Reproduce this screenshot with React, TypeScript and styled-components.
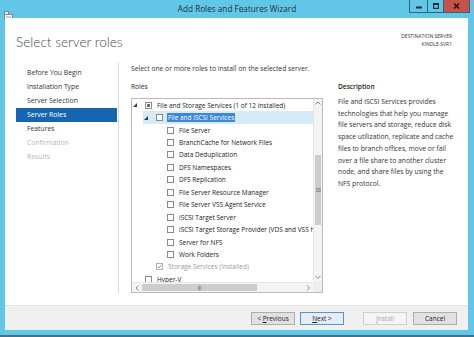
import React from "react"
import styled, { createGlobalStyle } from "styled-components"

const FRAME = "#62c6e7"
const BODY_FONT = `"Open Sans", "Noto Sans", sans-serif`

const GlobalStyle = createGlobalStyle`
  html, body {
    margin: 0;
    padding: 0;
    background: ${FRAME};
    overflow: hidden;
  }
  body {
    font-family: ${BODY_FONT};
  }
`

const Window = styled.div`
  width: 474px;
  height: 337px;
  background: ${FRAME};
  display: flex;
  flex-direction: column;
  overflow: hidden;
`

const TitleBar = styled.div`
  height: 18px;
  flex: none;
  display: grid;
  grid-template-columns: 176px 122px 176px;
  align-items: start;
`

const AppIcon = styled.div`
  padding: 3px 0 0 4px;
  height: 9px;
`

const TitleText = styled.div`
  line-height: 18px;
  font-size: 8.2px;
  color: #1d3340;
  white-space: nowrap;
  text-align: center;
`

const CaptionButtons = styled.div`
  justify-self: end;
  margin-right: 4px;
  display: flex;
  gap: 1px;
  padding: 0 1px 1px;
  background: #2f6479;
`

const CaptionButton = styled.div`
  width: 17px;
  height: 12px;
  background: ${FRAME};
  display: flex;
  align-items: center;
  justify-content: center;
`

const MinButton = styled(CaptionButton)`
  width: 17px;
`

const MaxButton = styled(CaptionButton)`
  width: 15px;
`

const CloseButton = styled(CaptionButton)`
  width: 25px;
  background: #c7524a;
`

const Client = styled.div`
  flex: 1;
  margin: 0 6px 0 5px;
  background: #ffffff;
  display: flex;
  flex-direction: column;
  min-height: 0;
`

const BottomFrame = styled.div`
  height: 5px;
  flex: none;
  border-bottom: 2px solid #3e7387;
`

const Header = styled.header`
  height: 40px;
  flex: none;
  box-sizing: border-box;
  padding: 14px 16px 0 11px;
  display: flex;
  justify-content: space-between;
  align-items: flex-start;
`

const PageTitle = styled.h1`
  margin: 2px 0 0;
  font-family: Lato, "Open Sans", sans-serif;
  font-weight: 300;
  font-size: 13.6px;
  line-height: 16px;
  color: #4a4a4a;
`

const Destination = styled.div`
  text-align: right;
  font-size: 5px;
  line-height: 8px;
  color: #333;
`

const Body = styled.div`
  flex: 1;
  display: flex;
  min-height: 0;
`

const Nav = styled.nav`
  width: 101px;
  flex: none;
  margin: 5px 0 12px;
  padding: 3px 1px 0 11px;
  border-right: 1px solid #dadada;
`

const NavItem = styled.div<{ $active?: boolean; $disabled?: boolean }>`
  height: 14px;
  line-height: 14px;
  padding-left: 11px;
  font-size: 6.8px;
  white-space: nowrap;
  background: ${(p) => (p.$active ? "#1565b0" : "transparent")};
  color: ${(p) => (p.$active ? "#ffffff" : p.$disabled ? "#b8b8b8" : "#333")};
`

const Content = styled.main`
  flex: 1;
  padding: 6px 0 0 12px;
  min-width: 0;
`

const Intro = styled.div`
  font-size: 6.75px;
  line-height: 10px;
  color: #333;
  white-space: nowrap;
`

const Columns = styled.div`
  display: flex;
  gap: 15px;
  margin-top: 8px;
`

const RolesColumn = styled.section`
  width: 192px;
  flex: none;
`

const Label = styled.div<{ $bold?: boolean }>`
  font-size: 6.6px;
  line-height: 10px;
  font-weight: ${(p) => (p.$bold ? 600 : 400)};
  color: #222;
  margin-bottom: 6px;
`

const ListBox = styled.div`
  width: 192px;
  height: 195px;
  box-sizing: border-box;
  border: 1px solid #bababa;
  display: grid;
  grid-template-columns: 1fr 9px;
  grid-template-rows: 1fr 10px;
`

const Tree = styled.div`
  overflow: hidden;
  min-width: 0;
`

const Row = styled.div`
  height: 12.45px;
  display: flex;
  align-items: stretch;
  white-space: nowrap;
`

const Indent = styled.div<{ $level: number }>`
  width: ${(p) => p.$level * 11}px;
  flex: none;
`

const RowBody = styled.div<{ $selected?: boolean }>`
  flex: 1;
  display: flex;
  align-items: center;
  background: ${(p) => (p.$selected ? "#d5ebf8" : "transparent")};
`

const Expander = styled.div`
  width: 13px;
  flex: none;
  display: flex;
  align-items: center;
  padding-left: 1px;
  box-sizing: border-box;
`

const Check = styled.div<{ $dim?: boolean }>`
  width: 7px;
  height: 7px;
  flex: none;
  box-sizing: border-box;
  border: 1px solid ${(p) => (p.$dim ? "#b3b3b3" : "#8a8a8a")};
  background: #fff;
  margin-right: 5px;
  display: flex;
  align-items: center;
  justify-content: center;
`

const Partial = styled.div`
  width: 3px;
  height: 3px;
  background: #6d6d6d;
`

const RowText = styled.span<{ $selected?: boolean; $dim?: boolean }>`
  font-size: 6.5px;
  line-height: 9px;
  padding: 0 1px;
  margin-left: -1px;
  color: ${(p) => (p.$selected ? "#fff" : p.$dim ? "#9a9a9a" : "#222")};
  background: ${(p) => (p.$selected ? "#3d87d8" : "transparent")};
`

const VScroll = styled.div`
  background: #f4f4f4;
  border-left: 1px solid #e6e6e6;
  display: flex;
  flex-direction: column;
`

const HScroll = styled.div`
  background: #f4f4f4;
  border-top: 1px solid #e6e6e6;
  display: flex;
  align-items: stretch;
`

const Corner = styled.div`
  background: #ededed;
`

const ArrowBox = styled.div<{ $w: number; $h: number }>`
  width: ${(p) => p.$w}px;
  height: ${(p) => p.$h}px;
  flex: none;
  display: flex;
  align-items: center;
  justify-content: center;
`

const Spacer = styled.div`
  flex: 1;
`

const VThumb = styled.div`
  height: 70px;
  margin: 47px 1px 0;
  background: #cdcdcd;
  display: flex;
  align-items: center;
  justify-content: center;
`

const HThumb = styled.div`
  width: 115px;
  margin: 1px 0;
  background: #cdcdcd;
  display: flex;
  align-items: center;
  justify-content: center;
`

const DescColumn = styled.section`
  flex: 1;
`

const DescText = styled.p`
  margin: -2px 0 0;
  font-size: 6.75px;
  line-height: 11.7px;
  color: #333;
`

const DescLine = styled.span`
  display: block;
  white-space: nowrap;
`

const Footer = styled.footer`
  height: 25px;
  flex: none;
  box-sizing: border-box;
  background: #f0f0f0;
  border-top: 1px solid #e4e4e4;
  padding: 6px 11px 0 0;
  display: flex;
  justify-content: flex-end;
  align-items: flex-start;
`

const Button = styled.button<{ $primary?: boolean; $gap: number }>`
  width: 44px;
  height: 13px;
  margin-left: ${(p) => p.$gap}px;
  padding: 0;
  box-sizing: border-box;
  font-family: ${BODY_FONT};
  font-size: 6.5px;
  line-height: 11px;
  color: ${(p) => (p.disabled ? "#a8a8a8" : "#222")};
  background: ${(p) =>
    p.disabled ? "#f4f4f4" : p.$primary ? "#e3eef8" : "#e1e1e1"};
  border: 1px solid
    ${(p) => (p.disabled ? "#cfcfcf" : p.$primary ? "#5a95c8" : "#adadad")};
  border-radius: 0;
`

const Chevron: React.FC<{ dir: "up" | "down" | "left" | "right" }> = ({ dir }) => {
  const points = {
    up: "0.5,3.5 3,1 5.5,3.5",
    down: "0.5,1 3,3.5 5.5,1",
    left: "3.5,0.5 1,3 3.5,5.5",
    right: "1,0.5 3.5,3 1,5.5",
  }[dir]
  const vertical = dir === "up" || dir === "down"
  return (
    <svg width={vertical ? 6 : 5} height={vertical ? 5 : 6} viewBox={vertical ? "0 0 6 5" : "0 0 5 6"}>
      <polyline points={points} fill="none" stroke="#7a7a7a" strokeWidth="0.9" />
    </svg>
  )
}

const Grip: React.FC<{ vertical?: boolean }> = ({ vertical }) => (
  <svg width="5" height="4" viewBox="0 0 5 4" style={vertical ? undefined : { transform: "rotate(90deg)" }}>
    <path d="M0 0.5h5M0 2h5M0 3.5h5" stroke="#7d7d7d" strokeWidth="0.7" />
  </svg>
)

const Triangle = () => (
  <svg width="4" height="4" viewBox="0 0 4 4">
    <polygon points="4,0 4,4 0,4" fill="#3a3a3a" />
  </svg>
)

type Item = {
  label: string
  level: number
  expanded?: boolean
  state?: "none" | "partial" | "checked"
  selected?: boolean
  dim?: boolean
}

const items: Item[] = [
  { label: "File and Storage Services (1 of 12 installed)", level: 0, expanded: true, state: "partial" },
  { label: "File and iSCSI Services", level: 1, expanded: true, selected: true },
  { label: "File Server", level: 2 },
  { label: "BranchCache for Network Files", level: 2 },
  { label: "Data Deduplication", level: 2 },
  { label: "DFS Namespaces", level: 2 },
  { label: "DFS Replication", level: 2 },
  { label: "File Server Resource Manager", level: 2 },
  { label: "File Server VSS Agent Service", level: 2 },
  { label: "iSCSI Target Server", level: 2 },
  { label: "iSCSI Target Storage Provider (VDS and VSS hardware providers)", level: 2 },
  { label: "Server for NFS", level: 2 },
  { label: "Work Folders", level: 2 },
  { label: "Storage Services (Installed)", level: 1, state: "checked", dim: true },
  { label: "Hyper-V", level: 0 },
]

const steps = [
  { label: "Before You Begin" },
  { label: "Installation Type" },
  { label: "Server Selection" },
  { label: "Server Roles", active: true },
  { label: "Features" },
  { label: "Confirmation", disabled: true },
  { label: "Results", disabled: true },
]

const description = [
  "File and iSCSI Services provides",
  "technologies that help you manage",
  "file servers and storage, reduce disk",
  "space utilization, replicate and cache",
  "files to branch offices, move or fail",
  "over a file share to another cluster",
  "node, and share files by using the",
  "NFS protocol.",
]

const TreeRow: React.FC<{ item: Item }> = ({ item }) => (
  <Row>
    <Indent $level={item.level} />
    <RowBody $selected={item.selected}>
      <Expander>{item.expanded && <Triangle />}</Expander>
      <Check $dim={item.dim}>
        {item.state === "partial" && <Partial />}
        {item.state === "checked" && (
          <svg width="5" height="5" viewBox="0 0 5 5">
            <polyline points="0.6,2.6 1.9,3.9 4.4,0.8" fill="none" stroke="#8c8c8c" strokeWidth="0.9" />
          </svg>
        )}
      </Check>
      <RowText $selected={item.selected} $dim={item.dim}>
        {item.label}
      </RowText>
    </RowBody>
  </Row>
)

const App: React.FC = () => {
  return (
    <Window>
      <GlobalStyle />
      <TitleBar>
        <AppIcon>
          <svg width="9" height="9" viewBox="0 0 9 9">
            <rect x="0.5" y="0.5" width="4" height="3" fill="#e8f2f6" stroke="#6b7b84" strokeWidth="0.8" />
            <rect x="0.5" y="3.5" width="8" height="5" fill="#f4f8fa" stroke="#6b7b84" strokeWidth="0.8" />
            <path d="M2 6h5" stroke="#7d8c94" strokeWidth="0.8" />
          </svg>
        </AppIcon>
        <TitleText>Add Roles and Features Wizard</TitleText>
        <CaptionButtons>
          <MinButton>
            <svg width="6" height="6" viewBox="0 0 6 6">
              <rect x="0" y="3.5" width="6" height="2" fill="#1f2d33" />
            </svg>
          </MinButton>
          <MaxButton>
            <svg width="6" height="6" viewBox="0 0 6 6">
              <rect x="0.6" y="0.6" width="4.8" height="4.8" fill="none" stroke="#1f2d33" strokeWidth="1.2" />
              <rect x="0" y="0" width="6" height="2" fill="#1f2d33" />
            </svg>
          </MaxButton>
          <CloseButton>
            <svg width="7" height="6" viewBox="0 0 7 6">
              <path d="M1 0.5l5 5M6 0.5l-5 5" stroke="#2b1414" strokeWidth="1.6" />
            </svg>
          </CloseButton>
        </CaptionButtons>
      </TitleBar>

      <Client>
        <Header>
          <PageTitle>Select server roles</PageTitle>
          <Destination>
            <div>DESTINATION SERVER</div>
            <div>KINDLE-SVR1</div>
          </Destination>
        </Header>

        <Body>
          <Nav>
            {steps.map((s) => (
              <NavItem key={s.label} $active={s.active} $disabled={s.disabled}>
                {s.label}
              </NavItem>
            ))}
          </Nav>

          <Content>
            <Intro>Select one or more roles to install on the selected server.</Intro>
            <Columns>
              <RolesColumn>
                <Label>Roles</Label>
                <ListBox>
                  <Tree>
                    {items.map((it) => (
                      <TreeRow key={it.label} item={it} />
                    ))}
                  </Tree>
                  <VScroll>
                    <ArrowBox $w={8} $h={9}>
                      <Chevron dir="up" />
                    </ArrowBox>
                    <VThumb>
                      <Grip vertical />
                    </VThumb>
                    <Spacer />
                    <ArrowBox $w={8} $h={9}>
                      <Chevron dir="down" />
                    </ArrowBox>
                  </VScroll>
                  <HScroll>
                    <ArrowBox $w={10} $h={9}>
                      <Chevron dir="left" />
                    </ArrowBox>
                    <HThumb>
                      <Grip />
                    </HThumb>
                    <Spacer />
                    <ArrowBox $w={10} $h={9}>
                      <Chevron dir="right" />
                    </ArrowBox>
                  </HScroll>
                  <Corner />
                </ListBox>
              </RolesColumn>

              <DescColumn>
                <Label $bold>Description</Label>
                <DescText>
                  {description.map((line) => (
                    <DescLine key={line}>{line}</DescLine>
                  ))}
                </DescText>
              </DescColumn>
            </Columns>
          </Content>
        </Body>

        <Footer>
          <Button $gap={0}>
            &lt; <u>P</u>revious
          </Button>
          <Button $gap={5} $primary>
            <u>N</u>ext &gt;
          </Button>
          <Button $gap={19} disabled>
            <u>I</u>nstall
          </Button>
          <Button $gap={6}>Cancel</Button>
        </Footer>
      </Client>
      <BottomFrame />
    </Window>
  )
}

export default App
